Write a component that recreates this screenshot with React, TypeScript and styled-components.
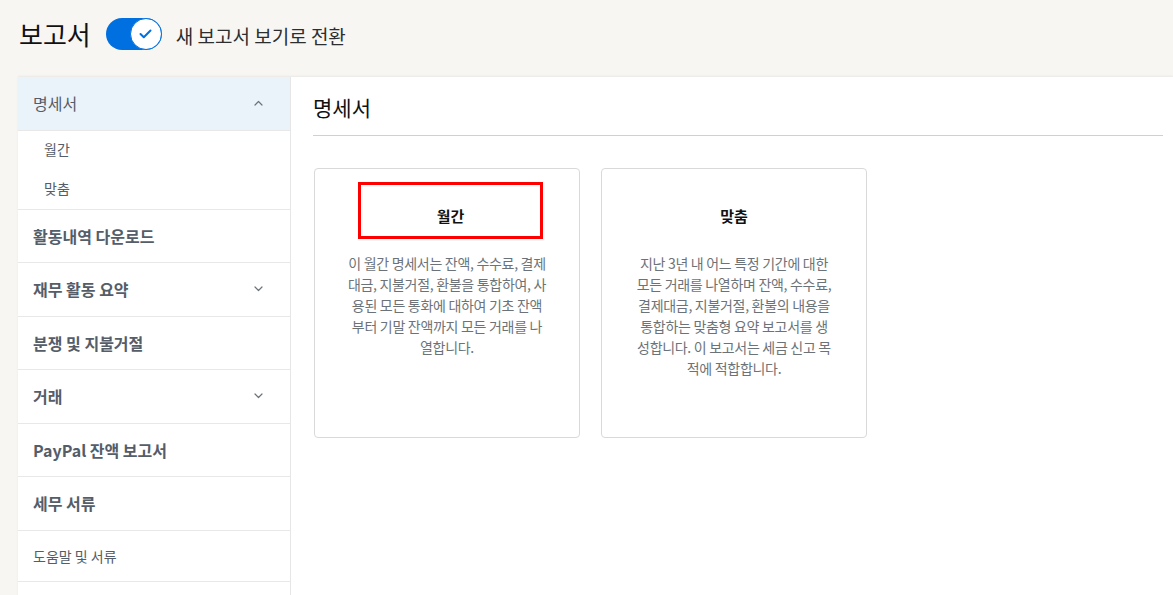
import React from "react";
import styled, {createGlobalStyle} from "styled-components";

const GlobalStyle = createGlobalStyle`
  html, body {
    margin: 0;
    padding: 0;
    background: #f7f6f3;
    font-family: "Noto Sans CJK KR", "Liberation Sans", sans-serif;
    color: #2c2e2f;
  }
`;

const Page = styled.div`
  height: 595px;
  overflow: hidden;
`;

const TopBar = styled.div`
  display: flex;
  align-items: center;
  height: 77px;
  padding: 0 0 10px 19px;
  box-sizing: border-box;
`;

const PageTitle = styled.h1`
  margin: 0 15px 0 0;
  font-size: 26px;
  font-weight: 400;
  color: #111;
  line-height: 1;
`;

const Track = styled.div`
  position: relative;
  width: 56px;
  height: 32px;
  border-radius: 16px;
  background: #0070e0;
  flex-shrink: 0;
`;

const Knob = styled.div`
  position: absolute;
  top: 0;
  right: 0;
  width: 32px;
  height: 32px;
  border-radius: 50%;
  border: 1.5px solid #0070e0;
  box-sizing: border-box;
  background: #fff;
  display: flex;
  align-items: center;
  justify-content: center;
`;

const ToggleLabel = styled.span`
  margin-left: 14px;
  margin-top: 3px;
  font-size: 19px;
  color: #2c2e2f;
`;

const Frame = styled.div`
  display: flex;
  margin-left: 18px;
  background: #fff;
  box-shadow: 0 -1px 2px rgba(0, 0, 0, 0.06);
  min-height: 518px;
`;

const Sidebar = styled.nav`
  width: 272px;
  flex-shrink: 0;
  border-right: 1px solid #e6e6e6;
`;

const NavRow = styled.div<{$active?: boolean; $small?: boolean}>`
  display: flex;
  align-items: center;
  justify-content: space-between;
  height: ${p => (p.$small ? "51px" : "53.5px")};
  padding: 0 27px 0 15px;
  border-bottom: 1px solid #e8e8e8;
  background: ${p => (p.$active ? "#ebf3fa" : "#fff")};
  font-size: ${p => (p.$small ? "14px" : "16px")};
  font-weight: ${p => (p.$small || p.$active ? 400 : 600)};
  color: #545d68;
  box-sizing: border-box;
`;

const SubList = styled.div`
  border-bottom: 1px solid #e8e8e8;
`;

const SubItem = styled.div`
  height: 39px;
  display: flex;
  align-items: center;
  padding: 0 0 2px 26px;
  box-sizing: border-box;
  font-size: 14px;
  color: #545d68;
`;

const Main = styled.main`
  flex: 1;
  padding: 0 10px 0 22px;
`;

const SectionTitle = styled.h2`
  margin: 0;
  height: 59px;
  display: flex;
  align-items: center;
  padding-top: 2px;
  font-size: 21px;
  font-weight: 400;
  color: #111;
  border-bottom: 1px solid #cbd2d6;
  box-sizing: border-box;
`;

const Cards = styled.div`
  display: flex;
  gap: 21px;
  margin: 32px 0 0 1px;
`;

const Card = styled.div`
  width: 266px;
  height: 270px;
  border: 1px solid #d9d9d9;
  border-radius: 4px;
  box-sizing: border-box;
  padding: 13px 0 0;
  display: flex;
  flex-direction: column;
  align-items: center;
  text-align: center;
`;

const CardTitle = styled.div<{$highlight?: boolean}>`
  width: 185px;
  height: 57px;
  margin-left: ${p => (p.$highlight ? "7px" : "0")};
  padding-top: 9px;
  box-sizing: border-box;
  display: flex;
  align-items: center;
  justify-content: center;
  font-size: 15px;
  font-weight: 700;
  color: #111;
  border: 3px solid ${p => (p.$highlight ? "#ff0000" : "transparent")};
`;

const CardText = styled.p`
  width: 199px;
  margin: 14px 0 0;
  font-size: 14px;
  line-height: 21px;
  letter-spacing: -0.3px;
  color: #6c7378;
`;

const Chevron = ({up}: {up?: boolean}) => (
  <svg width="9" height="6" viewBox="0 0 9 6" fill="none">
    <path
      d={up ? "M1 5L4.5 1.5L8 5" : "M1 1L4.5 4.5L8 1"}
      stroke="#6c7378"
      strokeWidth="1.2"
      strokeLinecap="round"
      strokeLinejoin="round"
    />
  </svg>
);

const navItems: {label: string; chevron?: boolean; small?: boolean}[] = [
  {label: "활동내역 다운로드"},
  {label: "재무 활동 요약", chevron: true},
  {label: "분쟁 및 지불거절"},
  {label: "거래", chevron: true},
  {label: "PayPal 잔액 보고서"},
  {label: "세무 서류"},
  {label: "도움말 및 서류", small: true},
  {label: ""},
];

export default function App() {
  return (
    <Page>
      <GlobalStyle />
      <TopBar>
        <PageTitle>보고서</PageTitle>
        <Track>
          <Knob>
            <svg width="13" height="10" viewBox="0 0 13 10" fill="none">
              <path d="M1.5 5L4.8 8.2L11.5 1.5" stroke="#0070e0" strokeWidth="2" strokeLinecap="round" strokeLinejoin="round" />
            </svg>
          </Knob>
        </Track>
        <ToggleLabel>새 보고서 보기로 전환</ToggleLabel>
      </TopBar>
      <Frame>
        <Sidebar>
          <NavRow $active>
            명세서
            <Chevron up />
          </NavRow>
          <SubList>
            <SubItem>월간</SubItem>
            <SubItem>맞춤</SubItem>
          </SubList>
          {navItems.map((item, i) => (
            <NavRow key={i} $small={item.small}>
              {item.label}
              {item.chevron && <Chevron />}
            </NavRow>
          ))}
        </Sidebar>
        <Main>
          <SectionTitle>명세서</SectionTitle>
          <Cards>
            <Card>
              <CardTitle $highlight>월간</CardTitle>
              <CardText>
                이 월간 명세서는 잔액, 수수료, 결제대금, 지불거절, 환불을 통합하여, 사용된 모든 통화에 대하여 기초 잔액부터 기말 잔액까지 모든 거래를 나열합니다.
              </CardText>
            </Card>
            <Card>
              <CardTitle>맞춤</CardTitle>
              <CardText>
                지난 3년 내 어느 특정 기간에 대한 모든 거래를 나열하며 잔액, 수수료, 결제대금, 지불거절, 환불의 내용을 통합하는 맞춤형 요약 보고서를 생성합니다. 이 보고서는 세금 신고 목적에 적합합니다.
              </CardText>
            </Card>
          </Cards>
        </Main>
      </Frame>
    </Page>
  );
}
